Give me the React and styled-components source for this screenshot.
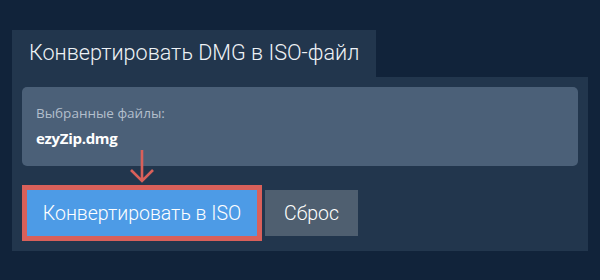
import React from 'react';
import styled, { createGlobalStyle } from 'styled-components';

const GlobalStyle = createGlobalStyle`
  html, body {
    margin: 0;
    padding: 0;
    background: #11233a;
  }
  body {
    width: 600px;
    height: 280px;
    overflow: hidden;
  }
`;

export default function App() {
  return (
    <Page>
      <GlobalStyle />
      <Tab>Конвертировать DMG в ISO-файл</Tab>
      <Panel>
        <FileBox>
          <Label>Выбранные файлы:</Label>
          <FileName>ezyZip.dmg</FileName>
        </FileBox>
        <Actions>
          <ConvertWrap>
            <Arrow width="26" height="34" viewBox="0 0 26 34">
              <path d="M13 1 V32 M2 21 L13 32 L24 21" fill="none" stroke="#d9605a" strokeWidth="2.6" />
            </Arrow>
            <Button $primary>Конвертировать в ISO</Button>
          </ConvertWrap>
          <Button>Сброс</Button>
        </Actions>
      </Panel>
    </Page>
  );
}

const Page = styled.div`
  display: flex;
  flex-direction: column;
  align-items: flex-start;
  padding: 30px 12px 0;
  font-family: 'Open Sans', sans-serif;
`;

const Tab = styled.div`
  background: #22364d;
  color: #eef2f6;
  font-family: 'Roboto', sans-serif;
  font-weight: 300;
  font-size: 21.6px;
  white-space: nowrap;
  height: 47px;
  line-height: 46px;
  padding: 0 0 0 17px;
  box-sizing: border-box;
  width: 364px;
`;

const Panel = styled.div`
  background: #22364d;
  width: 576px;
  box-sizing: border-box;
  padding: 10px 10px 15px;
`;

const FileBox = styled.div`
  background: #4b6078;
  border-radius: 5px;
  height: 79px;
  box-sizing: border-box;
  padding: 17px 14px 0;
`;

const Label = styled.div`
  color: #b3bfcc;
  font-size: 13.5px;
  line-height: 18px;
`;

const FileName = styled.div`
  color: #ffffff;
  font-weight: 700;
  font-size: 15px;
  line-height: 20px;
  margin-top: 6px;
  letter-spacing: -0.3px;
`;

const Actions = styled.div`
  display: flex;
  align-items: flex-end;
  gap: 8px;
  padding: 0 0 0 5px;
  margin-top: 24px;
`;

const ConvertWrap = styled.div`
  position: relative;
  display: flex;
`;

const Arrow = styled.svg`
  position: absolute;
  left: 102px;
  top: -41px;
`;

const Button = styled.button`
  border: none;
  outline: ${(p) => (p.$primary ? '5px solid #d9605a' : 'none')};
  background: ${(p) => (p.$primary ? '#4d9be6' : '#4f5f70')};
  color: #ffffff;
  font-family: 'Roboto', sans-serif;
  font-weight: 300;
  font-size: 19.5px;
  height: 46px;
  width: ${(p) => (p.$primary ? '230px' : '93px')};
  white-space: nowrap;
  padding: 0;
  cursor: pointer;
`;
